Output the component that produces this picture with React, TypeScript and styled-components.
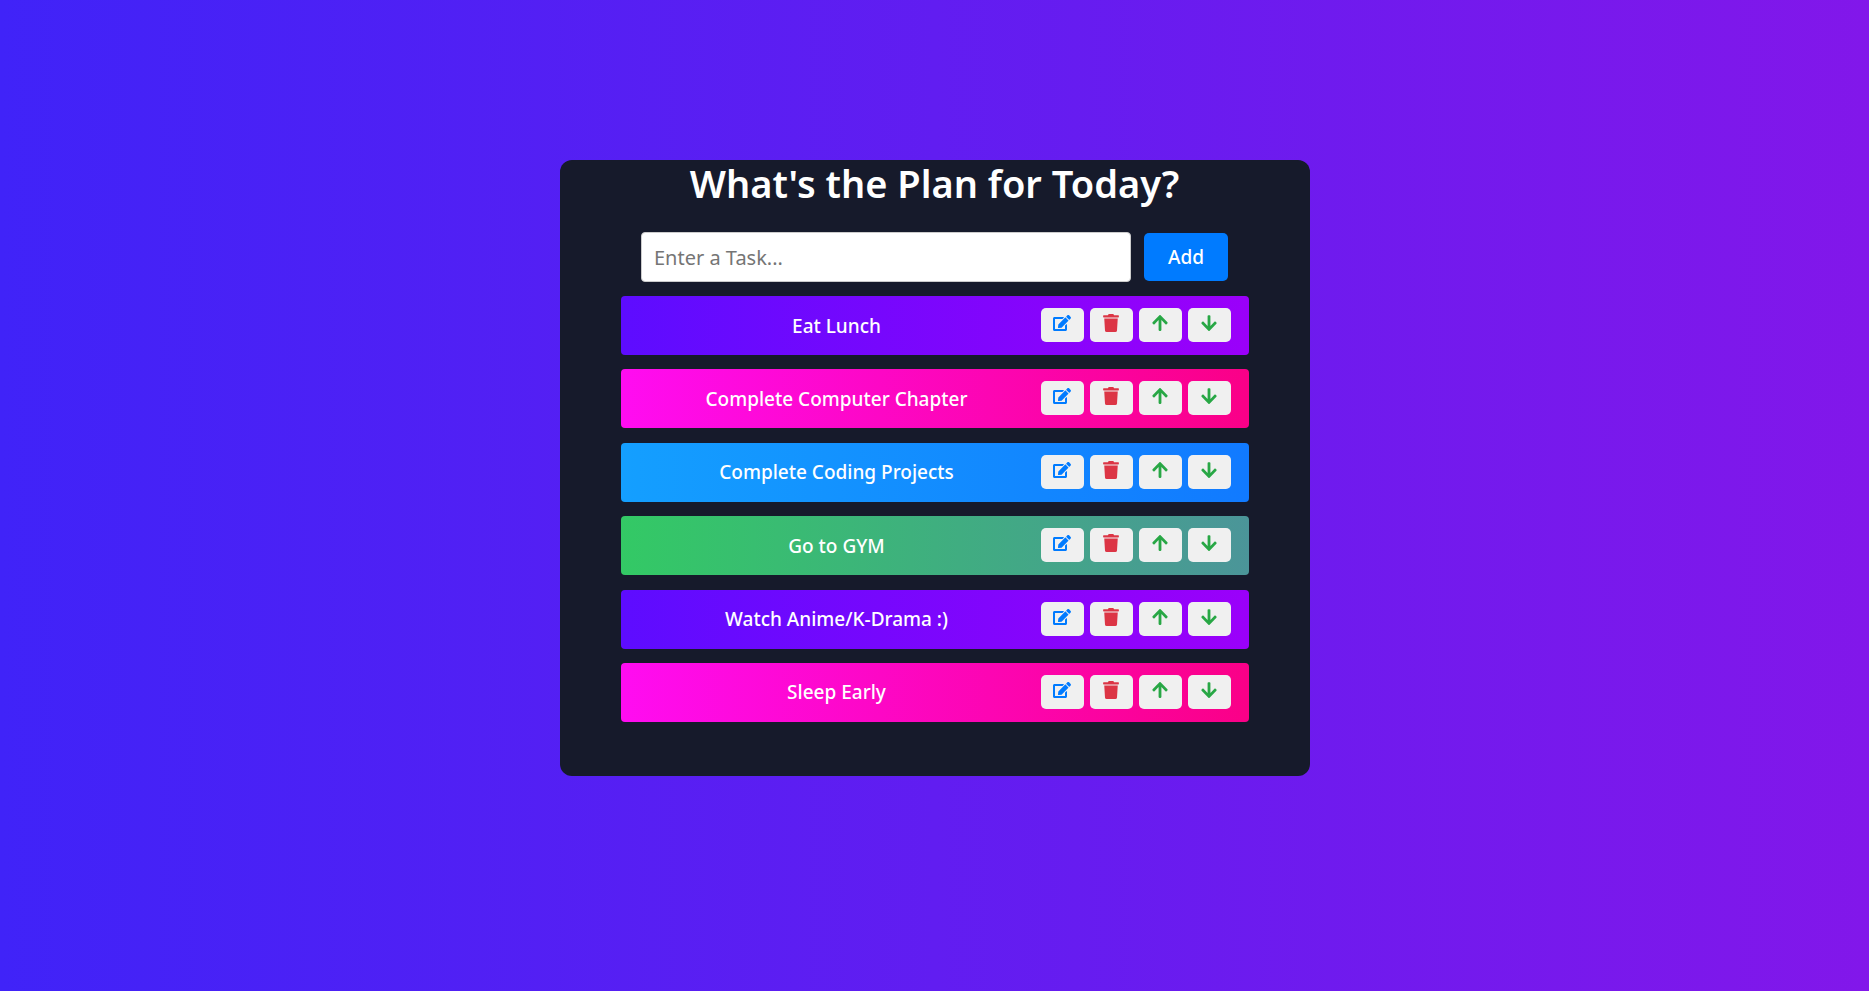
import React, { useState } from 'react';
import styled, { createGlobalStyle } from 'styled-components';
import { FaArrowDown, FaArrowUp, FaEdit, FaTrash } from 'react-icons/fa';

const GlobalStyle = createGlobalStyle`
  * { box-sizing: border-box; margin: 0; padding: 0; }
  body {
    font-family: 'Noto Sans', sans-serif;
    background: linear-gradient(90deg, #4023f8 0%, #8217ea 100%);
  }
`;

const Page = styled.main`
  min-height: 100vh;
  padding: 160px 16px;
`;

const Card = styled.section`
  display: flex;
  flex-direction: column;
  align-items: center;
  max-width: 750px;
  min-height: 616px;
  margin: 0 auto;
  padding-bottom: 54px;
  border-radius: 12px;
  background: #161a2b;
  color: #fff;
`;

const Title = styled.h1`
  font-size: 38px;
  font-weight: 600;
  line-height: 46px;
  text-align: center;
`;

const TaskForm = styled.form`
  display: flex;
  align-items: center;
  gap: 13px;
  width: 100%;
  max-width: 587px;
  margin: 26px 0 14px;
`;

const TaskInput = styled.input`
  flex: 1;
  min-width: 0;
  height: 50px;
  padding: 0 12px;
  border: 1px solid #ccc;
  border-radius: 4px;
  background: #fff;
  color: #222;
  font: 400 20px 'Noto Sans', sans-serif;
  &::placeholder { color: #757575; }
`;

const AddButton = styled.button`
  width: 84px;
  height: 48px;
  border: none;
  border-radius: 5px;
  background: #007bff;
  color: #fff;
  font: 500 19px 'Noto Sans', sans-serif;
  cursor: pointer;
`;

const TaskList = styled.ul`
  flex: 1;
  display: flex;
  flex-direction: column;
  justify-content: space-between;
  width: 100%;
  max-width: 628px;
  list-style: none;
`;

const TaskRow = styled.li<{ $from: string; $to: string }>`
  display: flex;
  align-items: center;
  height: 59px;
  padding-right: 18px;
  border-radius: 4px;
  background: linear-gradient(90deg, ${(p) => p.$from} 0%, ${(p) => p.$to} 100%);
`;

const TaskText = styled.span`
  flex: 1;
  padding-left: 12px;
  font-size: 19px;
  font-weight: 500;
  line-height: 24px;
  text-align: center;
`;

const Actions = styled.div`
  display: flex;
  gap: 6px;
  padding-bottom: 1px;
`;

const IconButton = styled.button<{ $color: string }>`
  display: flex;
  justify-content: center;
  width: 43px;
  height: 34px;
  padding: 6px 0 10px;
  border: none;
  border-radius: 5px;
  background: #f0f0f0;
  color: ${(p) => p.$color};
  font-size: 18px;
  cursor: pointer;
`;

const palettes = [
  ['#5d0cff', '#9b00fa'],
  ['#ff0cf1', '#fa0087'],
  ['#149fff', '#117aff'],
  ['#33c965', '#4b9599'],
];

const initialTasks = [
  'Eat Lunch',
  'Complete Computer Chapter',
  'Complete Coding Projects',
  'Go to GYM',
  'Watch Anime/K-Drama :)',
  'Sleep Early',
];

export default function App() {
  const [tasks, setTasks] = useState(initialTasks);
  const [draft, setDraft] = useState('');

  const add = (event: React.FormEvent) => {
    event.preventDefault();
    if (!draft.trim()) return;
    setTasks([...tasks, draft.trim()]);
    setDraft('');
  };

  const remove = (index: number) => setTasks(tasks.filter((_, i) => i !== index));

  const edit = (index: number) => {
    setDraft(tasks[index]);
    remove(index);
  };

  const move = (index: number, target: number) => {
    if (target < 0 || target >= tasks.length) return;
    const next = [...tasks];
    [next[index], next[target]] = [next[target], next[index]];
    setTasks(next);
  };

  return (
    <>
      <GlobalStyle />
      <Page>
        <Card>
          <Title>What's the Plan for Today?</Title>
          <TaskForm onSubmit={add}>
            <TaskInput
              aria-label="Task"
              placeholder="Enter a Task..."
              value={draft}
              onChange={(e) => setDraft(e.target.value)}
            />
            <AddButton type="submit">Add</AddButton>
          </TaskForm>
          <TaskList>
            {tasks.map((task, i) => {
              const [from, to] = palettes[i % palettes.length];
              return (
                <TaskRow key={task} $from={from} $to={to}>
                  <TaskText>{task}</TaskText>
                  <Actions>
                    <IconButton type="button" aria-label="Edit" $color="#007bff" onClick={() => edit(i)}>
                      <FaEdit />
                    </IconButton>
                    <IconButton type="button" aria-label="Delete" $color="#dc3545" onClick={() => remove(i)}>
                      <FaTrash />
                    </IconButton>
                    <IconButton type="button" aria-label="Move up" $color="#28a745" onClick={() => move(i, i - 1)}>
                      <FaArrowUp />
                    </IconButton>
                    <IconButton type="button" aria-label="Move down" $color="#28a745" onClick={() => move(i, i + 1)}>
                      <FaArrowDown />
                    </IconButton>
                  </Actions>
                </TaskRow>
              );
            })}
          </TaskList>
        </Card>
      </Page>
    </>
  );
}
